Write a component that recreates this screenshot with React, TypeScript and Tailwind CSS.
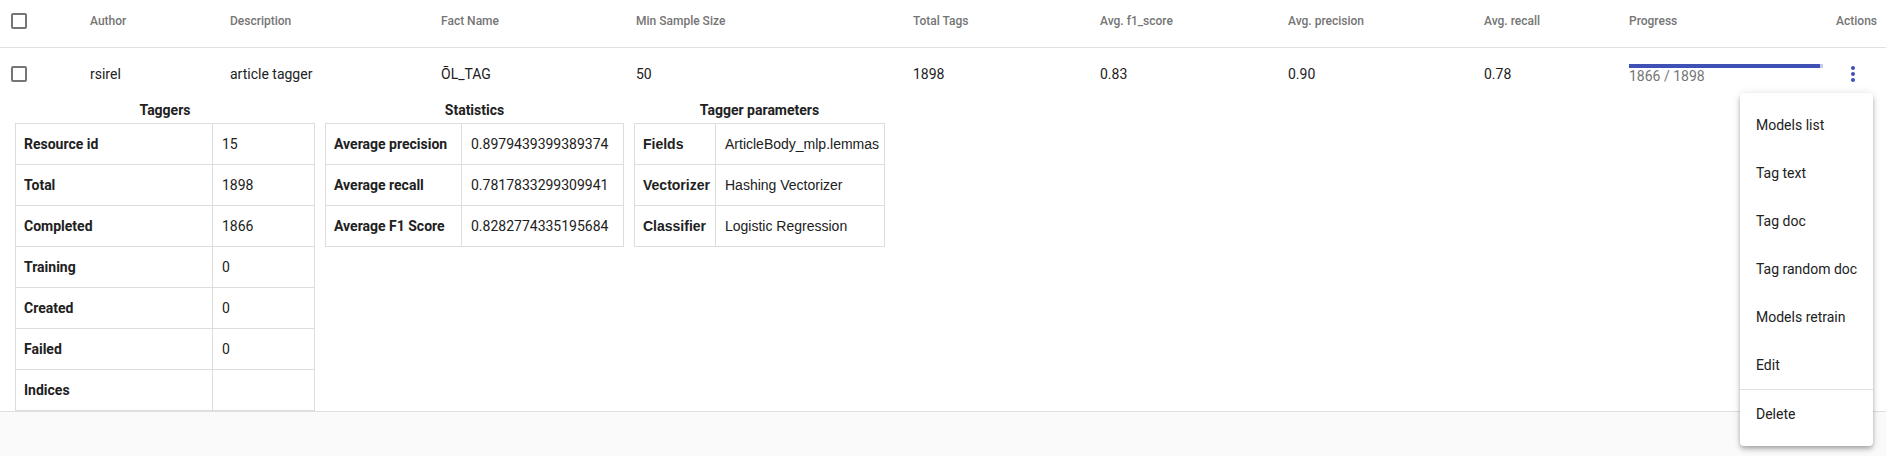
import React from 'react';

const cols = 'grid grid-cols-[90px_140px_211px_195px_277px_187px_188px_196px_145px_200px_1fr]';

const headers = ['Author', 'Description', 'Fact Name', 'Min Sample Size', 'Total Tags', 'Avg. f1_score', 'Avg. precision', 'Avg. recall', 'Progress'];
const row = ['rsirel', 'article tagger', 'ŌL_TAG', '50', '1898', '0.83', '0.90', '0.78'];

const taggers: [string, string][] = [
    ['Resource id', '15'],
    ['Total', '1898'],
    ['Completed', '1866'],
    ['Training', '0'],
    ['Created', '0'],
    ['Failed', '0'],
    ['Indices', ''],
];

const statistics: [string, string][] = [
    ['Average precision', '0.8979439399389374'],
    ['Average recall', '0.7817833299309941'],
    ['Average F1 Score', '0.8282774335195684'],
];

const params: [string, string][] = [
    ['Fields', 'ArticleBody_mlp.lemmas'],
    ['Vectorizer', 'Hashing Vectorizer'],
    ['Classifier', 'Logistic Regression'],
];

const menuItems = ['Models list', 'Tag text', 'Tag doc', 'Tag random doc', 'Models retrain', 'Edit'];

const Checkbox: React.FC = () => (
    <div className="ml-[11px] w-[16px] h-[16px] border-2 border-[#757575] rounded-[2px]" />
);

const DetailTable: React.FC<{ title: string; rows: [string, string][]; width: string; labelWidth: string; font?: string }> = ({ title, rows, width, labelWidth, font }) => (
    <div className={`flex flex-col ${font ?? ''}`}>
        <div className="h-[20px] leading-[20px] text-[14px] font-bold text-center text-[#212121] font-['Roboto',sans-serif] mb-[3px]">{title}</div>
        <table className={`${width} border-collapse table-fixed`}>
            <tbody>
                {rows.map(([k, v]) => (
                    <tr key={k} className="h-[41px]">
                        <td className={`${labelWidth} border border-[#dddddd] px-[8px] text-[14px] font-bold text-[#212121] whitespace-nowrap`}>{k}</td>
                        <td className="border border-[#dddddd] px-[9px] text-[14px] text-[#212121] whitespace-nowrap">{v}</td>
                    </tr>
                ))}
            </tbody>
        </table>
    </div>
);

const App: React.FC = () => {
    return (
        <div className="relative w-[1886px] h-[456px] overflow-hidden bg-[#fafafa] font-['Roboto',sans-serif]">
            <div className="bg-white border-b border-[#e0e0e0]">
                {/* header */}
                <div className={`${cols} h-[48px] items-center pb-[6px] border-b border-[#e0e0e0] text-[12px] font-medium text-[#757575]`}>
                    <Checkbox />
                    {headers.map((h) => (
                        <div key={h}>{h}</div>
                    ))}
                    <div className="text-right pr-[9px]">Actions</div>
                </div>

                {/* body row */}
                <div className={`${cols} h-[52px] items-center text-[14px] text-[#212121]`}>
                    <Checkbox />
                    {row.map((c, i) => (
                        <div key={i}>{c}</div>
                    ))}
                    <div className="flex flex-col -mt-[1px]">
                        <div className="flex w-[194px] h-[4px]">
                            <div className="h-full w-[191px] bg-[#3f51b5]" />
                            <div className="h-full flex-1 bg-[#c5cae9]" />
                        </div>
                        <div className="text-[14px] leading-[16px] text-[#757575]">1866 / 1898</div>
                    </div>
                    <div className="flex justify-end pr-[13px]">
                        <div className="w-[40px] h-[40px] flex items-center justify-center">
                            <svg width="24" height="24" viewBox="0 0 24 24" fill="#3f51b5">
                                <path d="M12 8c1.1 0 2-.9 2-2s-.9-2-2-2-2 .9-2 2 .9 2 2 2zm0 2c-1.1 0-2 .9-2 2s.9 2 2 2 2-.9 2-2-.9-2-2-2zm0 6c-1.1 0-2 .9-2 2s.9 2 2 2 2-.9 2-2-.9-2-2-2z" />
                            </svg>
                        </div>
                    </div>
                </div>

                {/* expanded detail */}
                <div className="flex items-start gap-[10px] pl-[15px]">
                    <DetailTable title="Taggers" rows={taggers} width="w-[300px]" labelWidth="w-[197px]" />
                    <DetailTable title="Statistics" rows={statistics} width="w-[299px]" labelWidth="w-[136px]" />
                    <DetailTable title="Tagger parameters" rows={params} width="w-[251px]" labelWidth="w-[81px]" font="font-['Liberation_Sans',Arial,sans-serif]" />
                </div>
            </div>

            {/* actions menu */}
            <div className="absolute left-[1740px] top-[93px] w-[133px] bg-white rounded-[4px] py-[8px] shadow-[0_2px_4px_-1px_rgba(0,0,0,0.2),0_4px_5px_0_rgba(0,0,0,0.14),0_1px_10px_0_rgba(0,0,0,0.12)] text-[14px] text-[#212121]">
                {menuItems.map((m) => (
                    <div key={m} className="h-[48px] flex items-center px-[16px] whitespace-nowrap">{m}</div>
                ))}
                <div className="h-px bg-[#e0e0e0]" />
                <div className="h-[48px] flex items-center px-[16px]">Delete</div>
            </div>
        </div>
    );
};

export default App;
